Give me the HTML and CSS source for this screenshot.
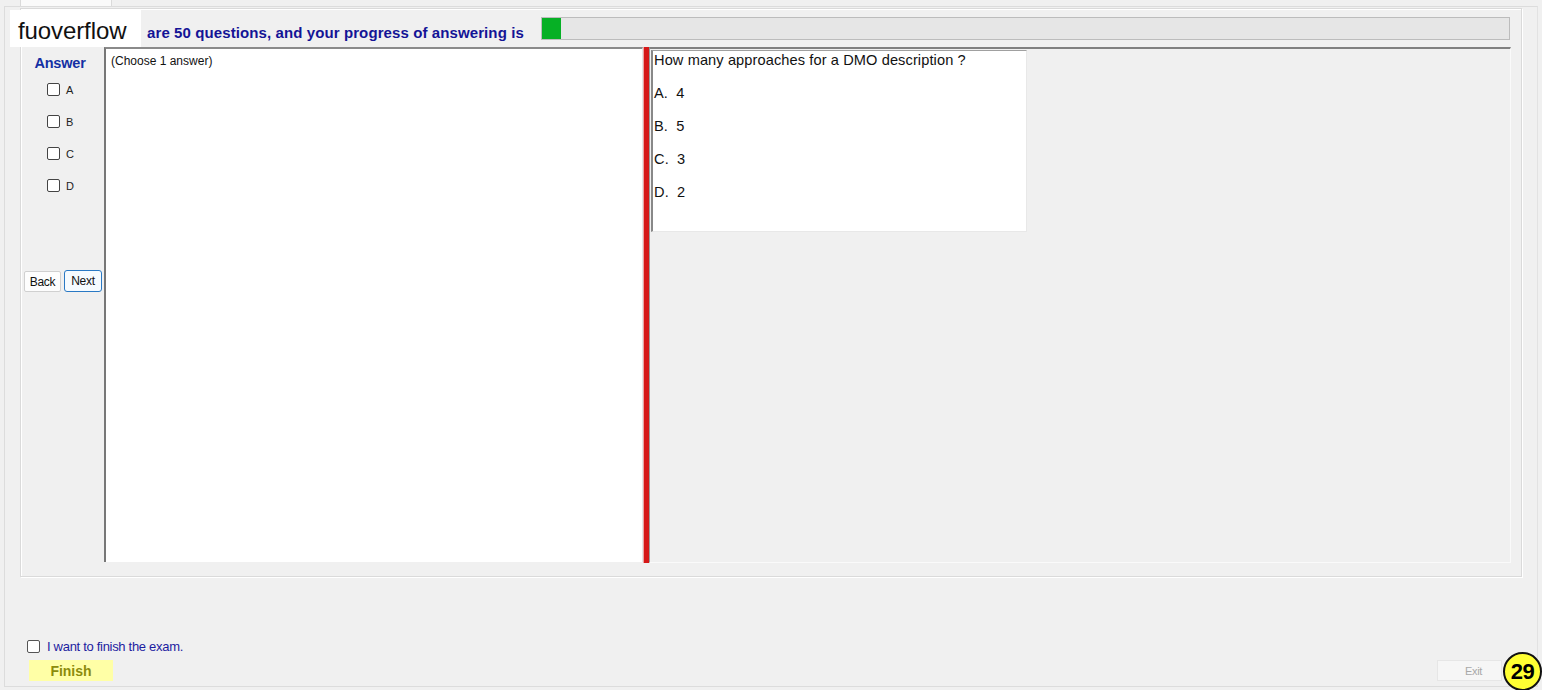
FILE: index.html
```html
<!DOCTYPE html>
<html>
<head>
<meta charset="utf-8">
<link rel="stylesheet" href="styles.css">
</head>
<body>
<div class="tabstrip"><div class="tab"></div></div>
<div class="page">
  <div class="group">
    <div class="header">
      <span class="progress-text">are 50 questions, and your progress of answering is</span>
      <div class="progress"><div class="progress-fill" style="width:19px"></div></div>
    </div>
    <div class="main">
      <div class="answer-col">
        <div class="answer-title">Answer</div>
        <label class="opt"><span class="cb"></span><span>A</span></label>
        <label class="opt"><span class="cb"></span><span>B</span></label>
        <label class="opt"><span class="cb"></span><span>C</span></label>
        <label class="opt"><span class="cb"></span><span>D</span></label>
        <div class="nav">
          <button class="btn">Back</button>
          <button class="btn focused">Next</button>
        </div>
      </div>
      <div class="textarea">(Choose 1 answer)</div>
      <div class="splitter"></div>
      <div class="right">
        <div class="question">
          <p class="q">How many approaches for a DMO description ?</p>
          <p class="a">A.&nbsp; 4</p>
          <p class="a">B.&nbsp; 5</p>
          <p class="a">C.&nbsp; 3</p>
          <p class="a">D.&nbsp; 2</p>
        </div>
      </div>
    </div>
  </div>
  <div class="footer">
    <label class="finish-check"><span class="cb"></span><span>I want to finish the exam.</span></label>
    <div class="footer-row">
      <button class="finish">Finish</button>
      <button class="exit">Exit</button>
    </div>
  </div>
</div>
<div class="watermark">fuoverflow</div>
<div class="badge">29</div>
</body>
</html>
```

FILE: styles.css
```css
html, body {
  margin: 0;
  padding: 0;
}
body {
  width: 1542px;
  height: 690px;
  overflow: hidden;
  background: #f0f0f0;
  font-family: "Liberation Sans", Arial, sans-serif;
  position: relative;
}
.tabstrip {
  height: 6px;
  display: flex;
  padding-left: 20px;
}
.tab {
  width: 90px;
  height: 6px;
  background: #fafafa;
  border-left: 1px solid #dadada;
  border-right: 1px solid #dadada;
}
.page {
  margin-left: 4px;
  width: 1532px;
  height: 679px;
  border: 1px solid #dcdcdc;
  border-right-color: #e2e2e2;
  background: #f0f0f0;
  display: flex;
  flex-direction: column;
}
.group {
  margin: 1px 0 0 15px;
  width: 1497px;
  height: 559px;
  border: 1px solid #dadada;
  box-shadow: inset 1px 1px 0 #ffffff, 1px 1px 0 #ffffff;
  padding: 8px 0 0 3px;
  display: flex;
  flex-direction: column;
}
.header {
  height: 23px;
  display: flex;
  align-items: center;
}
.progress-text {
  margin-left: 123px;
  font-size: 15px;
  font-weight: bold;
  color: #141496;
  padding-top: 7px;
  width: 394px;
  letter-spacing: 0.1px;
  white-space: nowrap;
}
.progress {
  width: 967px;
  height: 21px;
  border: 1px solid #bcbcbc;
  background: #e6e6e6;
  display: flex;
}
.progress-fill {
  height: 21px;
  background: #06b025;
}
.main {
  margin-top: 7px;
  height: 516px;
  display: flex;
  flex: none;
}
.answer-col {
  width: 80px;
  display: flex;
  flex-direction: column;
}
.answer-title {
  font-size: 14.5px;
  font-weight: bold;
  color: #1430a4;
  text-align: center;
  margin-top: 8px;
  padding-right: 8px;
  height: 20px;
  letter-spacing: -0.2px;
}
.opt {
  display: flex;
  align-items: center;
  margin-left: 23px;
  height: 13px;
  margin-top: 10px;
  margin-bottom: 9px;
  font-size: 11px;
  color: #222;
}
.opt:first-of-type {
  margin-top: 8px;
}
.cb {
  width: 11px;
  height: 11px;
  border: 1px solid #444;
  border-radius: 2px;
  background: #fff;
  display: inline-block;
  margin-right: 6px;
  flex: none;
}
.nav {
  margin-top: 69px;
  display: flex;
  gap: 3px;
}
.btn {
  font-family: "Liberation Sans", Arial, sans-serif;
  font-size: 12px;
  height: 21px;
  padding: 0;
  background: #fdfdfd;
  border: 1px solid #d0d0d0;
  border-radius: 2px;
  color: #111;
  letter-spacing: -0.3px;
}
.btn:first-child {
  width: 37px;
  margin-top: 1px;
}
.btn.focused {
  width: 38px;
  height: 22px;
  border: 1px solid #2a79c4;
  border-radius: 3px;
  background: #f6fbff;
}
.textarea {
  width: 536px;
  height: 513px;
  background: #fff;
  border-left: 2px solid #777;
  border-top: 2px solid #8a8a8a;
  border-right: 1px solid #e6e6e6;
  font-size: 12px;
  color: #111;
  padding: 0;
  text-indent: 5px;
  line-height: 24px;
}
.splitter {
  width: 5px;
  height: 516px;
  background: #d51818;
  border-left: 1px solid #f0a0a0;
}
.right {
  width: 859px;
  height: 512px;
  border-top: 2px solid #808080;
  border-left: 1px solid #9a9a9a;
  border-bottom: 1px solid #fafafa;
  border-right: 1px solid #fafafa;
  background: #f0f0f0;
  padding: 1px 0 0 1px;
}
.question {
  width: 372px;
  height: 180px;
  background: #fff;
  border-left: 2px solid #888;
  border-top: 1px solid #a0a0a0;
  border-right: 1px solid #e8e8e8;
  border-bottom: 1px solid #e8e8e8;
  padding: 0 0 0 1px;
}
.question p {
  margin: 0;
  font-size: 14.6px;
  color: #111;
  line-height: 16px;
  letter-spacing: 0.1px;
  white-space: nowrap;
}
.question .q {
  margin-top: 1px;
}
.question .a {
  margin-top: 17px;
}
.footer {
  flex: 1;
  display: flex;
  flex-direction: column;
  padding: 63px 0 0 22px;
}
.finish-check {
  display: flex;
  align-items: center;
  font-size: 13px;
  color: #1c1ca0;
  height: 13px;
  letter-spacing: -0.3px;
}
.finish-check .cb {
  margin-right: 7px;
  border-color: #555;
}
.footer-row {
  display: flex;
  justify-content: space-between;
  margin-top: 7px;
  padding-left: 2px;
  padding-right: 35px;
}
.finish {
  width: 84px;
  height: 21px;
  border: none;
  background: #ffffa6;
  font-family: "Liberation Sans", Arial, sans-serif;
  font-size: 14px;
  font-weight: bold;
  color: #8c8c0c;
  padding: 0;
}
.exit {
  width: 65px;
  height: 21px;
  border: 1px solid #e6e6e6;
  background: #f6f6f6;
  font-family: "Liberation Sans", Arial, sans-serif;
  font-size: 11px;
  color: #a8a8a8;
  padding: 0 0 0 8px;
  letter-spacing: -0.3px;
}
.watermark {
  position: absolute;
  left: 10px;
  top: 10px;
  width: 131px;
  height: 37px;
  background: #fff;
  font-size: 24px;
  color: #111;
  line-height: 42px;
  text-indent: 8px;
  letter-spacing: -0.1px;
}
.badge {
  position: absolute;
  left: 1503px;
  top: 652px;
  width: 35px;
  height: 35px;
  border: 2px solid #111;
  border-radius: 50%;
  background: #ffff33;
  font-size: 22px;
  font-weight: bold;
  color: #000;
  text-align: center;
  line-height: 36px;
  letter-spacing: -0.5px;
}
```
